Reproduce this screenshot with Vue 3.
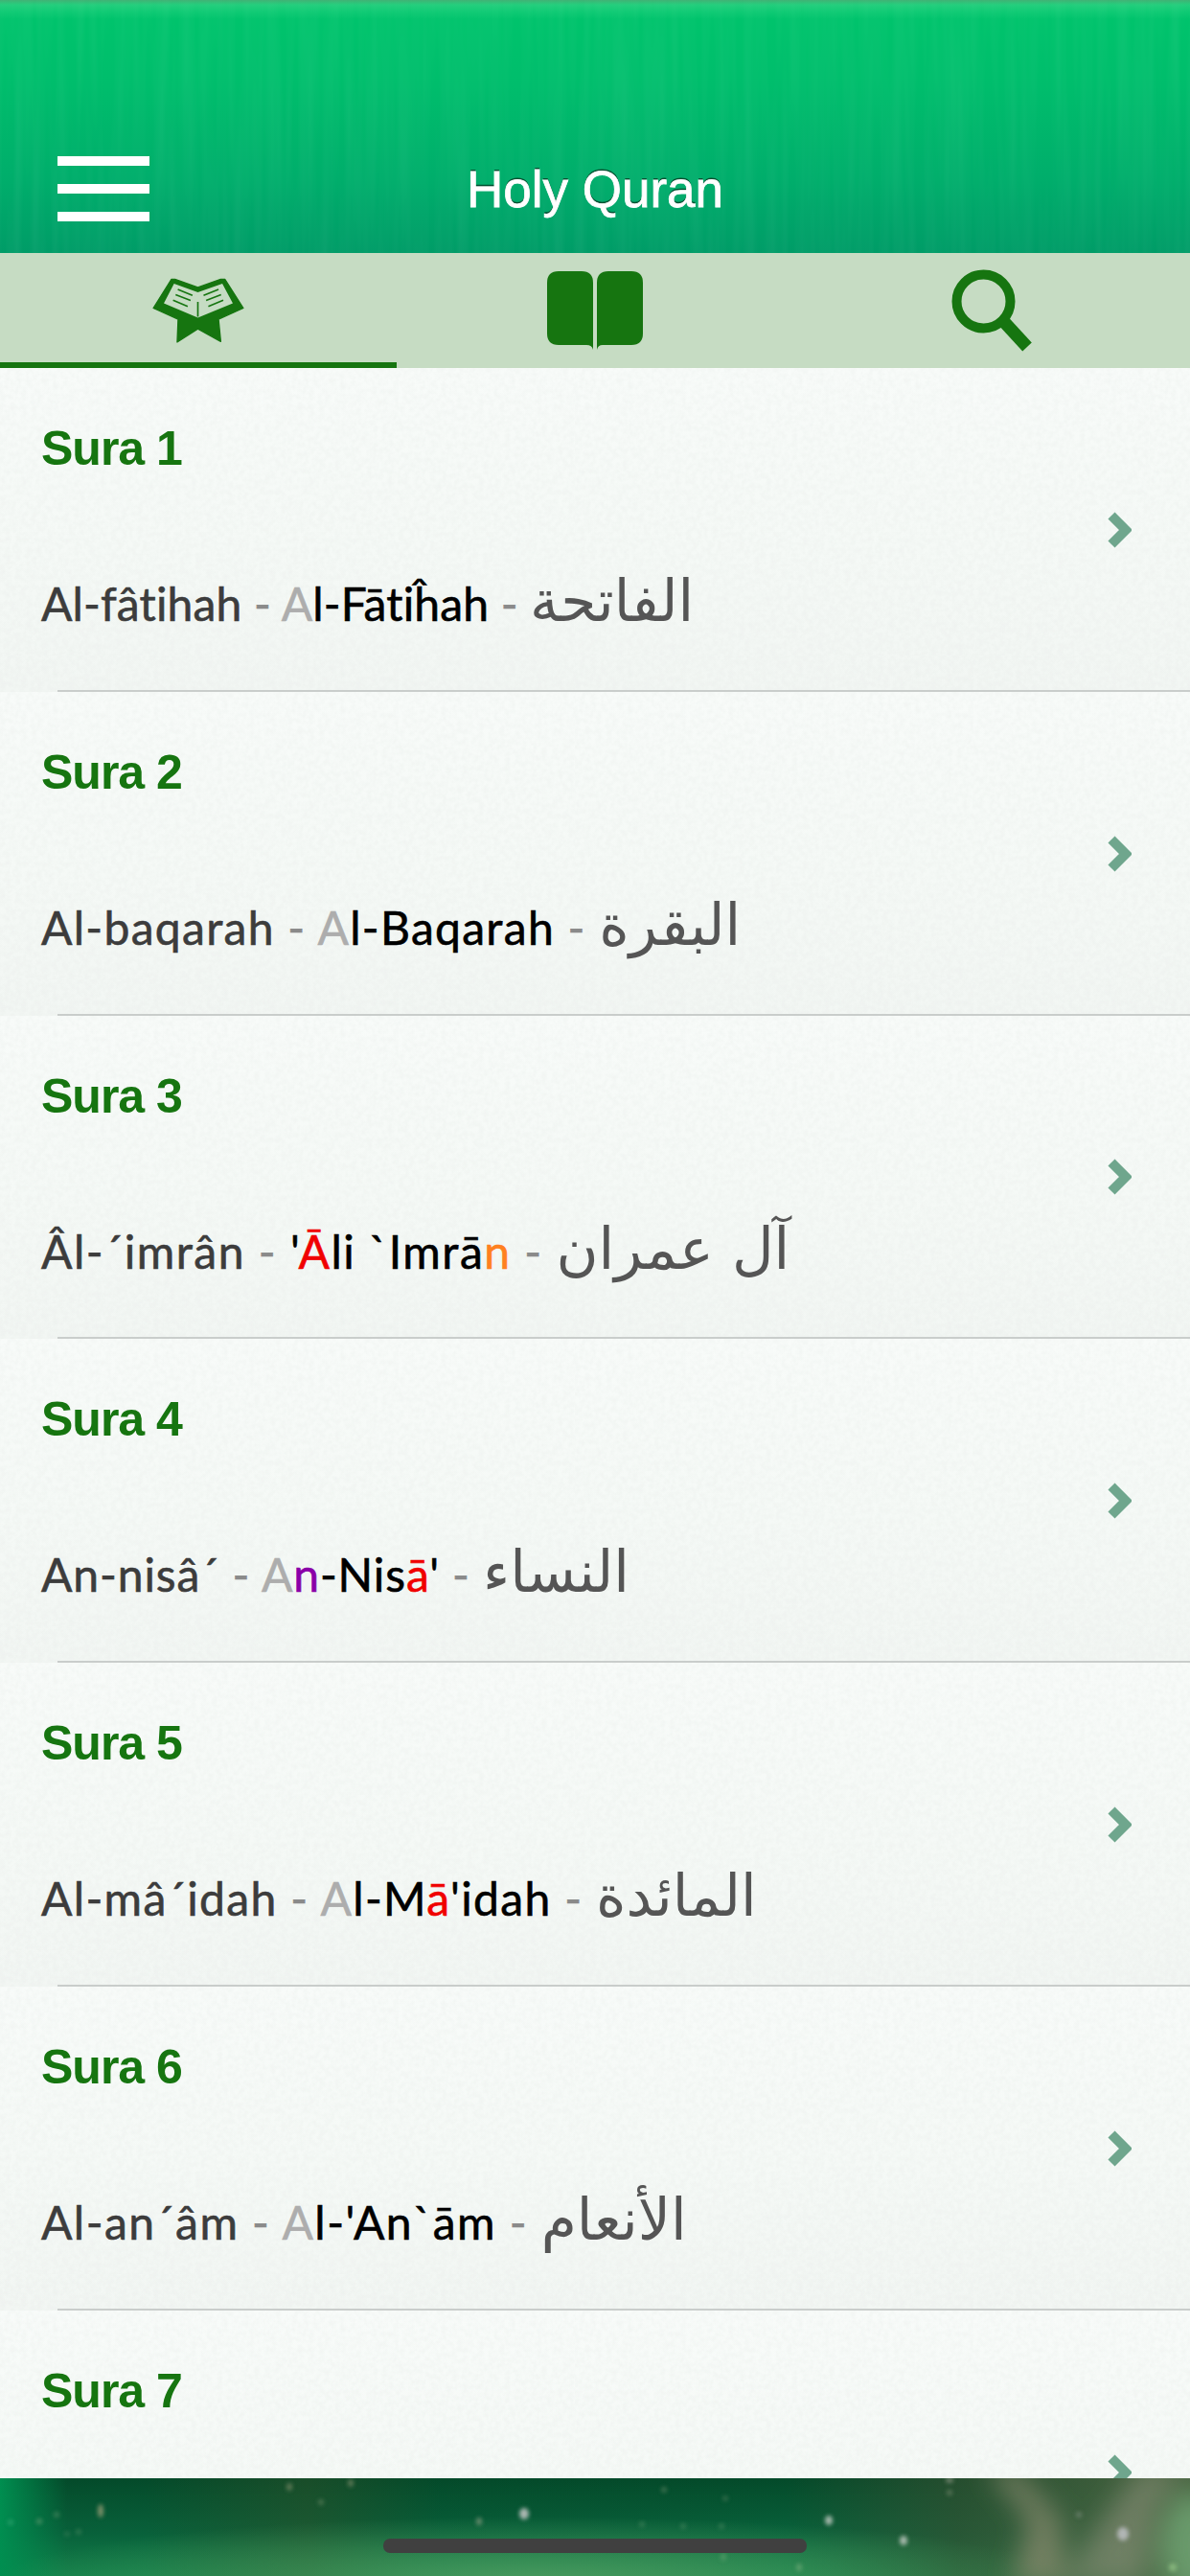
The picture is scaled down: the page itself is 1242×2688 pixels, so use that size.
<template>
  <div class="screen">
    <!-- 頂部標題列 -->
    <header class="nav-bar">
      <button class="menu-button">
        <span></span>
        <span></span>
        <span></span>
      </button>
      <h1 class="nav-title">Holy Quran</h1>
    </header>

    <!-- 分頁 -->
    <nav class="tabs">
      <div class="tab active">
        <svg class="icon-stand" viewBox="178 90 290 205">
          <path fill="#167510" stroke="#167510" stroke-width="4" stroke-linejoin="round" d="M180 185L237 94H248L320 120L392 94H405L463 185L385 220L392 290L320 250L255 292L258 220Z" />
          <path fill="#c6dcc3" d="M245 108L320 135L397 108L430 170L320 215L213 170Z" />
          <path fill="none" stroke="#167510" stroke-width="5" d="M320 165V212M257 126L303 145M250 143L297 161M242 160L288 180M385 126L338 145M393 143L346 161M400 160L353 180" />
        </svg>
      </div>
      <div class="tab">
        <svg class="icon-book" viewBox="0 0 100 82">
          <path fill="#167510" d="M12 0H36Q48 0 48 12V82Q47 77 41 77H12Q0 77 0 65V12Q0 0 12 0Z" />
          <path fill="#167510" d="M64 0H88Q100 0 100 12V65Q100 77 88 77H58Q53 77 52 82V12Q52 0 64 0Z" />
        </svg>
      </div>
      <div class="tab">
        <svg class="icon-search" viewBox="0 0 84 86">
          <circle cx="33.500" cy="33.500" r="28" fill="none" stroke="#167510" stroke-width="10" />
          <path d="M56 56L79 81" fill="none" stroke="#167510" stroke-width="13" />
        </svg>
      </div>
    </nav>

    <!-- 章節列表 -->
    <main class="sura-list">
      <div v-for="sura in suras" :key="sura.no" class="sura-row">
        <div class="sura-text">
          <h2 class="sura-title">Sura {{ sura.no }}</h2>
          <p v-if="sura.latin" class="sura-line" :style="{ letterSpacing: sura.track + 'px' }">
            <span class="latin">{{ sura.latin }}</span>
            <span class="dash"> - </span>
            <span v-for="(seg, i) in sura.segs" :key="i" :class="seg[1]">{{ seg[0] }}</span>
            <span class="dash"> - </span>
            <span class="arabic" dir="rtl">{{ sura.arabic }}</span>
          </p>
        </div>
        <svg class="chevron" viewBox="0 0 26 40">
          <path d="M5 5L20 20L5 35" fill="none" stroke="#6fa68d" stroke-width="10" />
        </svg>
      </div>
    </main>

    <!-- 底部背景 -->
    <footer class="bottom-bar">
      <svg class="nebula" viewBox="0 0 1242 102">
        <defs>
          <filter id="soft" x="-50%" y="-50%" width="200%" height="200%">
            <feGaussianBlur stdDeviation="14" />
          </filter>
          <filter id="softer" x="-50%" y="-50%" width="200%" height="200%">
            <feGaussianBlur stdDeviation="2" />
          </filter>
        </defs>
        <g filter="url(#soft)">
          <path d="M1030 -10L1075 45L1055 112H1115L1105 40L1060 -10Z" fill="#8f8d72" opacity="0.7" />
          <path d="M1190 -10L1140 60L1110 112H1195L1205 30L1235 -10Z" fill="#8d917a" opacity="0.6" />
          <ellipse cx="1245" cy="70" rx="34" ry="55" fill="#6da070" opacity="0.9" />
        </g>
        <g filter="url(#softer)">
          <ellipse v-for="(s, i) in specks" :key="i" :cx="s[0]" :cy="s[1]" :rx="s[2]" :ry="s[3]" :fill="s[4]" :opacity="s[5]" />
        </g>
      </svg>
      <div class="home-indicator"></div>
    </footer>
  </div>
</template>

<script setup>
// track: 每列的字距，讓拉丁字寬接近原本的幾何字體
const suras = [
  {
    no: 1,
    track: 0.15,
    latin: 'Al-fâtihah',
    segs: [['A', 'gray'], ['l-Fātiĥah', 'black']],
    arabic: 'الفاتحة'
  },
  {
    no: 2,
    track: 1.3,
    latin: 'Al-baqarah',
    segs: [['A', 'gray'], ['l-Baqarah', 'black']],
    arabic: 'البقرة'
  },
  {
    no: 3,
    track: 1.5,
    latin: 'Âl-´imrân',
    segs: [["'", 'black'], ['Ā', 'red'], ['li `Imrā', 'black'], ['n', 'orange']],
    arabic: 'آل عمران'
  },
  {
    no: 4,
    track: 0.9,
    latin: 'An-nisâ´',
    segs: [['A', 'gray'], ['n', 'purple'], ['-Nis', 'black'], ['ā', 'red'], ["'", 'black']],
    arabic: 'النساء'
  },
  {
    no: 5,
    track: 1.35,
    latin: 'Al-mâ´idah',
    segs: [['A', 'gray'], ['l-M', 'black'], ['ā', 'red'], ["'idah", 'black']],
    arabic: 'المائدة'
  },
  {
    no: 6,
    track: 1.45,
    latin: 'Al-an´âm',
    segs: [['A', 'gray'], ["l-'An`ām", 'black']],
    arabic: 'الأنعام'
  },
  { no: 7 }
];

// 底部星點：x, y, rx, ry, 顏色, 透明度
const specks = [
  [105, 34, 3, 7, '#b0a880', 0.7],
  [547, 37, 5, 6, '#c8c8c8', 0.85],
  [865, 44, 4, 5, '#c8d0c8', 0.8],
  [943, 65, 4, 5, '#c8d0c8', 0.8],
  [1172, 58, 6, 7, '#c8c8d0', 0.75],
  [500, 45, 3, 4, '#a0a890', 0.6],
  [41, 45, 3, 3, '#80a880', 0.5],
  [59, 38, 3, 3, '#80a880', 0.4],
  [11, 46, 3, 3, '#40b080', 0.5],
  [335, 25, 3, 3, '#90a080', 0.4],
  [302, 9, 3, 4, '#a0a080', 0.5],
  [366, 5, 3, 4, '#a0a080', 0.5],
  [70, 58, 3, 2, '#80a880', 0.3],
  [82, 56, 3, 3, '#80a880', 0.3],
  [1224, 93, 4, 4, '#a0d090', 0.6],
  [693, 12, 3, 3, '#90a080', 0.4],
  [757, 21, 3, 3, '#90a080', 0.3],
  [670, 48, 3, 3, '#80a880', 0.3],
  [713, 50, 3, 3, '#80a880', 0.3],
  [753, 50, 3, 3, '#80a880', 0.3],
  [991, 2, 4, 3, '#b0b0a0', 0.5],
  [991, 15, 3, 3, '#a0a890', 0.4],
  [834, 93, 3, 4, '#a0c090', 0.4],
  [755, 82, 3, 4, '#80b080', 0.4],
  [1126, 38, 3, 3, '#a0a8a0', 0.4]
];
</script>

<style>
html,
body {
  margin: 0;
  background: #f3f7f4;
}
</style>

<style scoped>
.screen {
  width: 1242px;
  height: 2688px;
  display: flex;
  flex-direction: column;
  overflow: hidden;
  font-family: "Liberation Sans", Arial, sans-serif;
}

/* 頂部標題列 */
.nav-bar {
  height: 264px;
  flex-shrink: 0;
  box-sizing: border-box;
  padding: 0 60px 33px;
  display: grid;
  grid-template-columns: 1fr auto 1fr;
  align-items: end;
  background:
    linear-gradient(180deg, rgba(90, 170, 120, 0.7) 0, rgba(70, 215, 140, 0.5) 5px, rgba(60, 220, 140, 0.25) 12px, transparent 20px),
    url("data:image/svg+xml,%3Csvg xmlns='http://www.w3.org/2000/svg' width='1242' height='264'%3E%3Cfilter id='s'%3E%3CfeTurbulence type='fractalNoise' baseFrequency='0.09 0.004' numOctaves='2'/%3E%3CfeColorMatrix values='0 0 0 0 1 0 0 0 0 1 0 0 0 0 1 0 0 0 0.09 -0.03'/%3E%3C/filter%3E%3Crect width='1242' height='264' filter='url(%23s)'/%3E%3C/svg%3E"),
    linear-gradient(180deg, #00c56c 0, #00bd6c 90px, #00ad6b 190px, #009c67 264px);
}

.menu-button {
  width: 96px;
  height: 68px;
  padding: 0;
  border: none;
  background: none;
  display: flex;
  flex-direction: column;
  justify-content: space-between;
}

.menu-button span {
  display: block;
  height: 10px;
  background-color: #fff;
}

.nav-title {
  margin: 0;
  position: relative;
  top: 1px;
  color: #fff;
  font-size: 53px;
  font-weight: 400;
  line-height: 68px;
  -webkit-text-stroke: 0.8px #fff;
  text-shadow: 0 -2px 0 rgba(0, 50, 30, 0.75);
}

/* 分頁 */
.tabs {
  height: 120px;
  flex-shrink: 0;
  display: grid;
  grid-template-columns: repeat(3, 1fr);
  background-color: #c6dcc3;
}

.tab {
  display: flex;
  align-items: center;
  justify-content: center;
}

.tab.active {
  box-shadow: inset 0 -6px 0 #167510;
}

.icon-stand {
  width: 97px;
  height: 68px;
}

.icon-book {
  width: 100px;
  height: 82px;
}

.icon-search {
  width: 84px;
  height: 86px;
}

/* 章節列表 */
.sura-list {
  flex: 1;
  min-height: 0;
  overflow: hidden;
}

.sura-row {
  position: relative;
  height: 337.8px;
  box-sizing: border-box;
  padding: 0 43px;
  display: flex;
  align-items: center;
  justify-content: space-between;
  background:
    url("data:image/svg+xml,%3Csvg xmlns='http://www.w3.org/2000/svg' width='300' height='300'%3E%3Cfilter id='n'%3E%3CfeTurbulence type='fractalNoise' baseFrequency='0.18' numOctaves='2' stitchTiles='stitch'/%3E%3CfeColorMatrix values='0 0 0 0 0.45 0 0 0 0 0.5 0 0 0 0 0.47 0 0 0 0.14 -0.045'/%3E%3C/filter%3E%3Crect width='300' height='300' filter='url(%23n)'/%3E%3C/svg%3E"),
    linear-gradient(180deg, #f8fbf9 0, #f5f9f6 55%, #f2f6f3 100%);
}

/* 分隔線 */
.sura-row::after {
  content: "";
  position: absolute;
  left: 60px;
  right: 0;
  bottom: 0;
  height: 2px;
  background-color: #c9cdcb;
}

.sura-text {
  align-self: flex-start;
}

.sura-title {
  margin: 0;
  padding-top: 57px;
  color: #167510;
  font-size: 50px;
  font-weight: 700;
  letter-spacing: -1px;
  line-height: 54px;
}

.sura-line {
  margin: 0;
  padding-top: 102px;
  font-family: Lato, "DejaVu Sans", sans-serif;
  font-size: 48px;
  line-height: 60px;
  white-space: pre;
  color: #000;
  -webkit-text-stroke: 0.6px currentColor;
}

.latin {
  color: #3c3c3c;
}

.dash {
  color: #8a8a8a;
}

.gray {
  color: #adadad;
}

.black {
  color: #000;
}

.red {
  color: #f00000;
}

.orange {
  color: #ff8020;
}

.purple {
  color: #8a00a8;
}

.arabic {
  font-family: "DejaVu Sans", sans-serif;
  font-size: 60px;
  line-height: 1;
  letter-spacing: 0;
  color: #555;
  -webkit-text-stroke: 0;
}

.chevron {
  width: 26px;
  height: 40px;
  margin-right: 18px;
  flex-shrink: 0;
}

/* 底部背景 */
.bottom-bar {
  height: 102px;
  flex-shrink: 0;
  position: relative;
  background:
    radial-gradient(ellipse 560px 66px at 560px 106px, rgba(75, 155, 95, 0.95), transparent 100%),
    linear-gradient(90deg, #008e50 0, rgba(0, 120, 70, 0) 70px),
    linear-gradient(90deg, transparent 0, transparent 150px, rgba(50, 80, 40, 0.45) 320px, rgba(0, 70, 40, 0.1) 460px, rgba(0, 70, 40, 0) 820px, rgba(60, 80, 50, 0.6) 1000px, rgba(85, 105, 70, 0.85) 1242px),
    linear-gradient(180deg, #044a2a 0, #08603a 55%, #12804a 100%);
}

.nebula {
  position: absolute;
  inset: 0;
  width: 100%;
  height: 100%;
}

.home-indicator {
  position: absolute;
  left: 400px;
  top: 63px;
  width: 442px;
  height: 15px;
  border-radius: 7px;
  background-color: #404040;
}
</style>
